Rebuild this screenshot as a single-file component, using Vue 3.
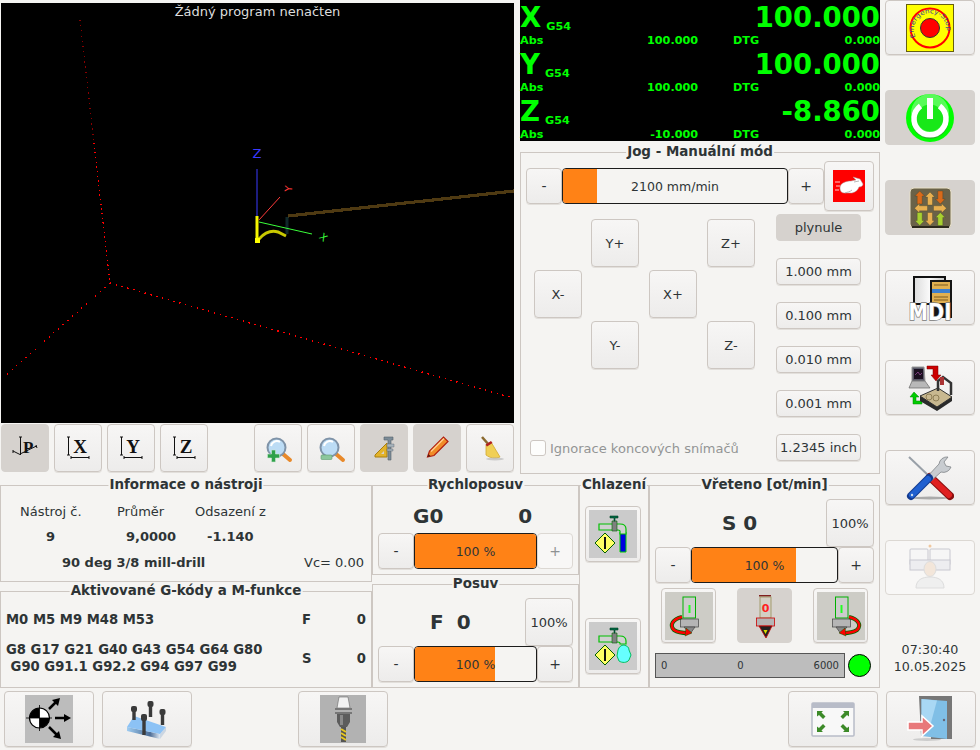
<template>
  <div class="app">
    <div class="main">
      <div class="work">
        <div class="upper">
          <!-- nahled drahy -->
          <div class="left-col">
            <div class="viewport">
              <div class="viewport-title">Žádný program nenačten</div>
              <svg class="scene" viewBox="1 3 513 420" width="513" height="420">
                <g shape-rendering="crispEdges">
                  <line x1="80" y1="20" x2="94" y2="143" stroke="#800" stroke-width="1.200" stroke-dasharray="1.200 4" />
                  <line x1="94" y1="143" x2="110" y2="283" stroke="#f00" stroke-width="1.200" stroke-dasharray="1.200 3.500" />
                  <line x1="110" y1="283" x2="3" y2="378" stroke="#f00" stroke-width="1.200" stroke-dasharray="1.200 5" />
                  <line x1="110" y1="283" x2="513" y2="398" stroke="#f00" stroke-width="1.400" stroke-dasharray="1.400 4.600" />
                  <line x1="288" y1="216" x2="514" y2="191" stroke="#4f3a12" stroke-width="3.200" />
                </g>
                <line x1="287" y1="217" x2="287" y2="234" stroke="#10282a" stroke-width="3" />
                <line x1="257" y1="169" x2="257" y2="218" stroke="#3a3aff" />
                <line x1="259" y1="220" x2="280" y2="197" stroke="#ff3a3a" />
                <line x1="259" y1="222" x2="312" y2="234" stroke="#3aff3a" />
                <path d="M259 239 Q268 229 278 232 L286 236" fill="none" stroke="#c8c800" stroke-width="3" />
                <line x1="257" y1="216" x2="257" y2="242" stroke="#f5f500" stroke-width="3" />
                <rect x="255" y="238" width="5" height="5" fill="#ff0" />
                <text x="257" y="158" class="axis" fill="#3a3aff" text-anchor="middle" font-size="13">Z</text>
                <text class="axis" fill="#3aff3a" text-anchor="middle" font-size="10" transform="translate(321 240) rotate(40)">X</text>
                <text class="axis" fill="#ff3a3a" text-anchor="middle" font-size="10" transform="translate(292 189) rotate(-85)">Y</text>
              </svg>
            </div>
            <div class="view-tools">
              <button class="btn tool checked">
                <svg viewBox="0 0 48 48" width="48" height="48">
                  <text x="22" y="29" class="serif-b" font-size="17">P</text>
                  <path d="M19.500 13V31M18 13h3M12 27l6 3M18 30.500l17.500-8.500M12 26v3M35 21l1 3" fill="none" stroke="#111" stroke-width="1" />
                </svg>
              </button>
              <button v-for="a in viewAxes" :key="a" class="btn tool">
                <svg viewBox="0 0 48 48" width="48" height="48">
                  <text x="26" y="29" text-anchor="middle" class="serif-b" font-size="19">{{ a }}</text>
                  <path d="M14.500 13V31M13 13h3M13 31h3M17 33.500H35M17 32v3M35 32v3" fill="none" stroke="#111" stroke-width="1" />
                </svg>
              </button>
              <div class="spacer"></div>
              <button class="btn tool">
                <svg viewBox="0 0 48 48" width="48" height="48">
                  <line x1="29" y1="30" x2="36" y2="36" stroke="#e8892a" stroke-width="4" stroke-linecap="round" />
                  <circle cx="22.500" cy="23.500" r="9" fill="#bcdcf5" stroke="#7f93a8" stroke-width="2" />
                  <path d="M17 22a6 6 0 0 1 9-4" fill="none" stroke="#fff" stroke-width="2" />
                  <path d="M17.500 26h4v4h4v4h-4v4h-4v-4h-4v-4h4z" fill="#2fa14a" stroke="#cfe8d4" stroke-width=".6" />
                </svg>
              </button>
              <button class="btn tool">
                <svg viewBox="0 0 48 48" width="48" height="48">
                  <line x1="29" y1="30" x2="36" y2="36" stroke="#e8892a" stroke-width="4" stroke-linecap="round" />
                  <circle cx="22.500" cy="23.500" r="9" fill="#bcdcf5" stroke="#7f93a8" stroke-width="2" />
                  <path d="M17 22a6 6 0 0 1 9-4" fill="none" stroke="#fff" stroke-width="2" />
                  <rect x="14" y="31" width="11" height="4.500" rx="1" fill="#8cc79c" stroke="#5f9d70" stroke-width=".6" />
                </svg>
              </button>
              <button class="btn tool checked">
                <svg viewBox="0 0 48 48" width="48" height="48">
                  <path d="M15 31 L27 19 V33 H15Z" fill="#e3b32a" stroke="#a87e10" stroke-width="1" />
                  <path d="M21 30l3-3v3z" fill="#d6d2ce" />
                  <path d="M24 13h9v3h-2v20h-3V16h-4z" fill="#7c8c98" stroke="#55626c" stroke-width=".6" />
                  <path d="M27 20h7v3h-7zM27 25h6v2h-6z" fill="#a8b4bc" stroke="#55626c" stroke-width=".4" />
                </svg>
              </button>
              <button class="btn tool checked">
                <svg viewBox="0 0 48 48" width="48" height="48">
                  <path d="M14.500 33l2-6 14-14 4.500 4.500-14 14z" fill="#f08c28" stroke="#b01e10" stroke-width="1.200" />
                  <path d="M18 27.500l13-13" stroke="#ffd08a" stroke-width="1.500" />
                  <path d="M14.500 33l1-3 2 2z" fill="#5a1a10" />
                </svg>
              </button>
              <button class="btn tool">
                <svg viewBox="0 0 48 48" width="48" height="48">
                  <line x1="16" y1="13" x2="23" y2="21" stroke="#8a6a30" stroke-width="2.500" />
                  <path d="M20 21l5-3 9 15c-5 2-10 1-14-2z" fill="#f0cf55" stroke="#d0a830" stroke-width=".8" />
                  <path d="M19.500 20.500l5.500-3.500 1.500 2-5.500 3.500z" fill="#b02020" />
                  <ellipse cx="29" cy="35" rx="9" ry="1.500" fill="#bbb" opacity=".7" />
                </svg>
              </button>
            </div>
          </div>

          <div class="right-col">
            <!-- DRO -->
            <div class="dro">
              <div v-for="row in dro" :key="row.axis" class="dro-row">
                <div class="dro-main">
                  <span class="dro-axis">{{ row.axis }}</span>
                  <span class="dro-g">G54</span>
                  <span class="dro-big">{{ row.value }}</span>
                </div>
                <div class="dro-sub">
                  <span class="dro-abs">Abs</span>
                  <span class="dro-absval">{{ row.abs }}</span>
                  <span class="dro-dtg">DTG</span>
                  <span class="dro-dtgval">0.000</span>
                </div>
              </div>
            </div>

            <!-- Jog -->
            <div class="group jog">
              <div class="group-title">Jog - Manuální mód</div>
              <div class="jog-top">
                <button class="btn sq-btn">-</button>
                <div class="bar jog-bar">
                  <div class="bar-fill" :style="{ width: '15%' }"></div>
                  <span class="bar-text">2100 mm/min</span>
                </div>
                <button class="btn sq-btn">+</button>
                <button class="btn rabbit-btn">
                  <svg viewBox="0 0 32 32" width="32" height="32">
                    <rect width="32" height="32" fill="#f00" />
                    <path d="M2 12h5M3 16h4M2 20h4" stroke="#fff" stroke-width=".8" />
                    <path d="M7 18c0-5 6-7 11-7 1 0 3-1 5-1l-3-3 7 2 3 5c0 2-2 3-4 3-1 3-3 5-7 6H11c-3 0-4-3-4-5z" fill="#fff" stroke="#a99" stroke-width=".5" />
                    <path d="M12 23c2-1 5-1 7-3M21 12l5-1" stroke="#999" stroke-width=".7" fill="none" />
                  </svg>
                </button>
              </div>
              <div class="jog-body">
                <div class="jog-left">
                  <div class="jog-pad">
                    <button class="btn pad-btn" style="grid-area: 1 / 2">Y+</button>
                    <button class="btn pad-btn" style="grid-area: 1 / 4">Z+</button>
                    <button class="btn pad-btn" style="grid-area: 2 / 1">X-</button>
                    <button class="btn pad-btn" style="grid-area: 2 / 3">X+</button>
                    <button class="btn pad-btn" style="grid-area: 3 / 2">Y-</button>
                    <button class="btn pad-btn" style="grid-area: 3 / 4">Z-</button>
                  </div>
                  <label class="check">
                    <span class="check-box"></span>
                    <span>Ignorace koncových snímačů</span>
                  </label>
                </div>
                <div class="incs">
                  <button v-for="(inc, i) in increments" :key="inc" class="btn inc-btn" :class="{ checked: i === 0 }">{{ inc }}</button>
                </div>
              </div>
            </div>
          </div>
        </div>

        <div class="lower">
          <div class="col-info">
            <div class="group info">
              <div class="group-title">Informace o nástroji</div>
              <div class="info-labels">
                <span>Nástroj č.</span>
                <span>Průměr</span>
                <span>Odsazení z</span>
              </div>
              <div class="info-values">
                <span>9</span>
                <span>9,0000</span>
                <span>-1.140</span>
              </div>
              <div class="info-name">
                <span class="tool-name">90 deg 3/8 mill-drill</span>
                <span>Vc= 0.00</span>
              </div>
            </div>
            <div class="group active">
              <div class="group-title">Aktivované G-kódy a M-funkce</div>
              <div class="code-row mcodes">
                <span class="codes">M0 M5 M9 M48 M53</span>
                <span class="code-key">F</span>
                <span class="code-val">0</span>
              </div>
              <div class="code-row gcodes">
                <span class="codes" v-text="gcodes"></span>
                <span class="code-key">S</span>
                <span class="code-val">0</span>
              </div>
            </div>
          </div>

          <div class="col-speed">
            <div class="group rapid">
              <div class="group-title">Rychloposuv</div>
              <div class="speed-top rapid-top">
                <span class="big g0">G0</span>
                <span class="big g0-val">0</span>
              </div>
              <div class="bar-row">
                <button class="btn sq-btn">-</button>
                <div class="bar">
                  <div class="bar-fill" :style="{ width: '100%' }"></div>
                  <span class="bar-text">100 %</span>
                </div>
                <button class="btn sq-btn disabled">+</button>
              </div>
            </div>
            <div class="group feed">
              <div class="group-title">Posuv</div>
              <div class="speed-top">
                <span class="big f-key">F</span>
                <span class="big f-val">0</span>
                <button class="btn pct-btn">100%</button>
              </div>
              <div class="bar-row">
                <button class="btn sq-btn">-</button>
                <div class="bar">
                  <div class="bar-fill" :style="{ width: '66.500%' }"></div>
                  <span class="bar-text">100 %</span>
                </div>
                <button class="btn sq-btn">+</button>
              </div>
            </div>
          </div>

          <div class="group cool">
            <div class="group-title">Chlazení</div>
            <button class="btn icon-btn">
              <svg viewBox="0 0 48 48" width="48" height="48">
                <rect width="48" height="48" fill="#cbcbcb" />
                <path d="M31 22h6v20h-6z" fill="#0000e0" stroke="#00d000" stroke-width="1" />
                <path d="M10 14h21c4 0 6 2 6 5v5h-6v-3c0-1-1-1-2-1H10z" fill="#d0d0d0" stroke="#00c000" stroke-width="1.200" />
                <path d="M23 11h5v10h-5z" fill="#808080" stroke="#006000" stroke-width=".6" />
                <path d="M21 6h8v2h-3v3h-1V8h-4z" fill="#064" stroke="#042" stroke-width=".6" />
                <path d="M16 23l10 10-10 10-10-10z" fill="#ffff66" stroke="#006000" stroke-width="1" />
                <rect x="15" y="27" width="2" height="12" fill="#111" />
              </svg>
            </button>
            <button class="btn icon-btn mist">
              <svg viewBox="0 0 48 48" width="48" height="48">
                <rect width="48" height="48" fill="#cbcbcb" />
                <path d="M10 14h21c4 0 6 2 6 5v3h-6v-1c0-1-1-1-2-1H10z" fill="#d0d0d0" stroke="#00c000" stroke-width="1.200" />
                <path d="M23 11h5v10h-5z" fill="#808080" stroke="#006000" stroke-width=".6" />
                <path d="M21 6h8v2h-3v3h-1V8h-4z" fill="#064" stroke="#042" stroke-width=".6" />
                <path d="M35 23c3 1 5 2 5 5l2 5-2 5c-2 3-7 3-10 1l-2-5 1-6c1-3 3-5 6-5z" fill="#66ffff" stroke="#00c060" stroke-width="1" />
                <path d="M16 23l10 10-10 10-10-10z" fill="#ffff66" stroke="#006000" stroke-width="1" />
                <rect x="15" y="27" width="2" height="12" fill="#111" />
              </svg>
            </button>
          </div>

          <div class="group spindle">
            <div class="group-title">Vřeteno [ot/min]</div>
            <div class="speed-top">
              <span class="big s-val">S 0</span>
              <button class="btn pct-btn">100%</button>
            </div>
            <div class="bar-row">
              <button class="btn sq-btn">-</button>
              <div class="bar">
                <div class="bar-fill" :style="{ width: '71.500%' }"></div>
                <span class="bar-text">100 %</span>
              </div>
              <button class="btn sq-btn">+</button>
            </div>
            <div class="spindle-btns">
              <button class="btn spin-btn">
                <svg viewBox="0 0 48 48" width="48" height="48">
                  <rect width="48" height="48" fill="#cdccc6" />
                  <rect x="18" y="5" width="12.500" height="21" fill="#ccc" stroke="#00b000" stroke-width="1" />
                  <rect x="23.500" y="13" width="2" height="8" fill="#2f2" />
                  <rect x="15.500" y="27" width="18" height="8" fill="#b5b5b5" stroke="#444" stroke-width=".7" />
                  <path d="M19 35h11l-5 7z" fill="#888" stroke="#444" stroke-width=".7" />
                  <path d="M17 25C8 27 4 33 9 38c3 2 8 3 14 3" fill="none" stroke="#060" stroke-width="4" />
                  <path d="M17 25C8 27 4 33 9 38c3 2 8 3 14 3" fill="none" stroke="#f00" stroke-width="2.500" />
                  <path d="M21 36l6 5-7 3z" fill="#f00" stroke="#060" stroke-width=".5" />
                </svg>
              </button>
              <button class="btn spin-btn checked">
                <svg viewBox="0 0 48 48" width="48" height="48">
                  <rect x="18" y="3" width="12" height="1.500" fill="#802020" />
                  <rect x="19" y="5" width="11" height="21" fill="#d3cfc4" stroke="#999058" stroke-width=".8" />
                  <text x="24.500" y="20" text-anchor="middle" fill="#f22" class="spin-zero">0</text>
                  <rect x="15.500" y="26" width="18" height="8" fill="#b5b5b5" stroke="#c00" stroke-width=".8" />
                  <path d="M18 34h13l-6 12z" fill="#222" stroke="#c00" stroke-width=".8" />
                  <path d="M22.500 38h4l-2 4z" fill="#dd0" />
                </svg>
              </button>
              <button class="btn spin-btn">
                <svg viewBox="0 0 48 48" width="48" height="48">
                  <rect width="48" height="48" fill="#cdccc6" />
                  <g transform="matrix(-1 0 0 1 49 0)">
                    <rect x="18" y="5" width="12.500" height="21" fill="#ccc" stroke="#00b000" stroke-width="1" />
                    <rect x="23.500" y="13" width="2" height="8" fill="#2f2" />
                    <rect x="15.500" y="27" width="18" height="8" fill="#b5b5b5" stroke="#444" stroke-width=".7" />
                    <path d="M19 35h11l-5 7z" fill="#888" stroke="#444" stroke-width=".7" />
                    <path d="M17 25C8 27 4 33 9 38c3 2 8 3 14 3" fill="none" stroke="#060" stroke-width="4" />
                    <path d="M17 25C8 27 4 33 9 38c3 2 8 3 14 3" fill="none" stroke="#f00" stroke-width="2.500" />
                    <path d="M21 36l6 5-7 3z" fill="#f00" stroke="#060" stroke-width=".5" />
                  </g>
                </svg>
              </button>
            </div>
            <div class="rpm-row">
              <div class="rpm-bar">
                <span>0</span>
                <span>0</span>
                <span>6000</span>
              </div>
              <div class="led"></div>
            </div>
          </div>
        </div>
      </div>

      <!-- prave tlacitka -->
      <div class="side">
        <button class="btn side-btn">
          <svg viewBox="0 0 48 48" width="48" height="48">
            <rect x=".5" y=".5" width="47" height="47" fill="#ff0" stroke="#665f10" />
            <circle cx="24" cy="24" r="19.500" fill="none" stroke="#f00" stroke-width="2" />
            <path id="estop-arc" d="M9.500 33A16.500 16.500 0 1 1 40.500 29" fill="none" />
            <text class="estop" fill="#3a3f90"><textPath href="#estop-arc" textLength="60" lengthAdjust="spacingAndGlyphs">Emergency-Stop</textPath></text>
            <circle cx="24" cy="24" r="9.500" fill="#f00" stroke="#333" stroke-width="1" />
          </svg>
        </button>
        <button class="btn side-btn checked">
          <svg viewBox="0 0 48 48" width="48" height="48">
            <circle cx="24" cy="24" r="24" fill="#0f0" />
            <circle cx="24" cy="19" r="19" fill="#7dfa7d" opacity=".7" />
            <path d="M14.500 12A16 16 0 1 0 33.500 12" fill="none" stroke="#555" stroke-width="5" opacity=".5" transform="translate(0 1.500)" />
            <circle cx="24" cy="24" r="13.500" fill="#18e818" />
            <path d="M14.500 12A16 16 0 1 0 33.500 12" fill="none" stroke="#fff" stroke-width="5.500" />
            <rect x="21" y="4" width="6" height="21" fill="#fff" />
          </svg>
        </button>
        <button class="btn side-btn checked">
          <svg viewBox="0 0 48 48" width="48" height="48">
            <rect x="4" y="4" width="41" height="40" rx="4" fill="#6a6248" stroke="#e8e0c8" stroke-width="1" />
            <rect x="6" y="42" width="37" height="2" fill="#2d2a1e" />
            <g v-for="a in jogArrows" :key="a.x + '-' + a.y" :transform="`translate(${a.x} ${a.y}) rotate(${a.r})`">
              <path d="M0 -6.500L4.800 -1.500H2.500V6.500H-2.500V-1.500H-4.800Z" :fill="a.c" stroke="#3b3622" stroke-width=".3" />
            </g>
          </svg>
        </button>
        <button class="btn side-btn">
          <svg class="mdi-icon" viewBox="0 0 48 48" width="48" height="48">
            <defs>
              <linearGradient id="mdi-win" x1="0" y1="0" x2="1" y2="0">
                <stop offset="0" stop-color="#dcdcdc" />
                <stop offset=".5" stop-color="#fafafa" />
                <stop offset="1" stop-color="#c8c8c8" />
              </linearGradient>
            </defs>
            <rect x="8" y="3" width="31" height="27" fill="url(#mdi-win)" stroke="#111" stroke-width="2" />
            <rect x="24" y="6" width="22" height="38" fill="#151515" />
            <rect x="26" y="8" width="18" height="7" fill="#e0b050" />
            <rect x="26" y="15" width="18" height="4" fill="#3a7fd0" />
            <rect x="26" y="19" width="18" height="10" fill="#e0b050" />
            <path d="M28 11h14M28 23h14M28 26h14" stroke="#7a5a20" />
            <g transform="translate(0 45.500) scale(1 1.150)">
              <text x="24" y="0" text-anchor="middle" class="mdi" fill="#fff" stroke="#777" stroke-width="1.200" paint-order="stroke">MDI</text>
            </g>
          </svg>
        </button>
        <button class="btn side-btn">
          <svg viewBox="0 0 48 48" width="48" height="48">
            <path d="M6 3h12l1 14H6z" fill="#5a5a68" stroke="#999" />
            <rect x="8" y="5" width="9" height="10" fill="#1a1020" />
            <path d="M9 11l3-3 2 3 2-2" stroke="#a050a0" fill="none" stroke-width=".7" />
            <path d="M6 17h13l5 7H3z" fill="#b8b8b8" stroke="#666" stroke-width=".7" />
            <path d="M21 2h11v9h3l-5 6-5-6h2V5h-6z" fill="#c00" stroke="#700" stroke-width=".5" />
            <path d="M8 28l5 5h-3v4h6v3H7v-7H4z" fill="#0c0" stroke="#080" stroke-width=".5" />
            <path d="M14 32L32 24L46 33L31 43Z" fill="#c8b890" stroke="#333" stroke-width="1" />
            <path d="M31 43v4l15-10v-4zM14 32v5l17 10v-4z" fill="#2a2a2a" />
            <path d="M32 27v-10l5-4 8 6v12" fill="none" stroke="#333" stroke-width="2.500" />
            <rect x="34" y="13" width="4" height="8" fill="#a33" />
            <circle cx="23" cy="33" r="3" fill="none" stroke="#807048" stroke-width=".8" />
            <circle cx="30" cy="34" r="3" fill="none" stroke="#807048" stroke-width=".8" />
          </svg>
        </button>
        <button class="btn side-btn">
          <svg viewBox="0 0 48 48" width="48" height="48">
            <ellipse cx="24" cy="44" rx="18" ry="1.500" fill="#aaa" />
            <line x1="3" y1="3" x2="24" y2="23" stroke="#99a0a8" stroke-width="2" />
            <path d="M24 23L44 42" stroke="#8a1010" stroke-width="8" stroke-linecap="round" />
            <path d="M25 24L43 41" stroke="#e02020" stroke-width="6" stroke-linecap="round" />
            <path d="M33 10a8 8 0 0 1 9-7l-4 5 2 4 5 1a8 8 0 0 1-10 5L24 28l-4-4z" fill="#c8ccd0" stroke="#808488" stroke-width=".8" />
            <path d="M23 24L5 42" stroke="#123a90" stroke-width="8" stroke-linecap="round" />
            <path d="M22 25L6 41" stroke="#2060d0" stroke-width="6" stroke-linecap="round" />
            <circle cx="6" cy="41" r="1.200" fill="#cde" />
          </svg>
        </button>
        <button class="btn side-btn disabled">
          <svg viewBox="0 0 48 48" width="48" height="48">
            <rect x="4" y="5" width="18" height="16" rx="1" fill="#f6f6f6" stroke="#c8c8d0" stroke-width="1" />
            <rect x="24" y="5" width="20" height="16" rx="1" fill="#f6f6f6" stroke="#c8c8d0" stroke-width="1" />
            <rect x="4" y="16" width="40" height="10" fill="#ededf0" stroke="#c8c8d0" />
            <circle cx="24" cy="2" r="1.500" fill="#f0c8a0" />
            <path d="M10 44c0-8 6-11 14-11s14 3 14 11z" fill="#efefef" stroke="#ddd" />
            <ellipse cx="24" cy="25" rx="6" ry="7.500" fill="#f3e6da" stroke="#ddd" />
          </svg>
        </button>
        <div class="clock">
          <div>07:30:40</div>
          <div>10.05.2025</div>
        </div>
      </div>
    </div>

    <!-- spodni lista -->
    <div class="bottom">
      <button class="btn bottom-btn">
        <svg viewBox="0 0 48 48" width="48" height="48">
          <rect width="48" height="48" fill="#bcbcbc" />
          <circle cx="14.500" cy="23" r="10" fill="#fff" />
          <path d="M14.500 23V13A10 10 0 0 0 4.500 23ZM14.500 23V33A10 10 0 0 0 24.500 23Z" fill="#000" />
          <circle cx="14.500" cy="23" r="10" fill="none" stroke="#000" stroke-width="1.200" />
          <path d="M14.500 10V36M1 23H27" stroke="#000" stroke-width=".8" />
          <path d="M24 14L32 6" stroke="#000" stroke-width="2.500" />
          <path d="M35 3l-2 8-6-6z" fill="#000" />
          <path d="M30 23H40" stroke="#000" stroke-width="2.500" />
          <path d="M46 23l-7 4v-8z" fill="#000" />
          <path d="M24 32L32 40" stroke="#000" stroke-width="2.500" />
          <path d="M36 44l-8-2 6-6z" fill="#000" />
        </svg>
      </button>
      <button class="btn bottom-btn">
        <svg viewBox="0 0 48 48" width="48" height="48">
          <defs>
            <linearGradient id="block-side" x1="0" y1="0" x2="1" y2="0">
              <stop offset="0" stop-color="#9fcdf2" />
              <stop offset=".7" stop-color="#4d6d96" />
              <stop offset="1" stop-color="#dfe8f2" />
            </linearGradient>
          </defs>
          <path d="M4 32L37 39V44L4 36Z" fill="url(#block-side)" />
          <path d="M37 39L43 32V36L37 44Z" fill="#cbd6e2" />
          <path d="M4 32L11 21L43 32L37 39Z" fill="#8cc2f5" />
          <g fill="#3a3a3a">
            <rect x="8" y="11" width="6" height="6" rx="2" /><rect x="9.300" y="16" width="3.400" height="9" />
            <rect x="24.500" y="6" width="6" height="6" rx="2" /><rect x="25.800" y="11" width="3.400" height="11" />
            <rect x="36.500" y="14" width="6" height="6" rx="2" /><rect x="37.800" y="19" width="3.400" height="11" />
            <rect x="18" y="19" width="6" height="7" rx="2" /><rect x="19.300" y="25" width="3.400" height="15" />
          </g>
        </svg>
      </button>
      <div class="spacer-a"></div>
      <button class="btn bottom-btn">
        <svg viewBox="0 0 46 48" width="46" height="48">
          <rect width="46" height="48" fill="#b2b2b2" />
          <path d="M19 2h9l2 11H17z" fill="#f2f2f2" stroke="#666" stroke-width=".6" />
          <rect x="15" y="13" width="17" height="2" fill="#777" />
          <rect x="15" y="17" width="17" height="2" fill="#777" />
          <path d="M17 19h13v8l-3 5h-7l-3-5z" fill="#5c5c5c" />
          <rect x="20" y="20" width="3" height="10" fill="#8a8a8a" />
          <rect x="21" y="32" width="5" height="15" fill="#555" />
          <path d="M21 34l5 3M21 38l5 3M21 42l5 3" stroke="#e8c820" stroke-width="2" />
        </svg>
      </button>
      <div class="spacer"></div>
      <button class="btn bottom-btn">
        <svg viewBox="0 0 48 48" width="48" height="48">
          <rect x="3" y="8" width="42" height="33" rx="1" fill="#f8f8f8" stroke="#b8bcc8" stroke-width="1.500" />
          <rect x="3" y="8" width="42" height="5" fill="#b8bcc8" />
          <g fill="#3c8a28">
            <path d="M8 16h6l-1.500 1.500 4 4-2.500 2.500-4-4L8 21.500z" />
            <path d="M40 16h-6l1.500 1.500-4 4 2.500 2.500 4-4L40 21.500z" />
            <path d="M8 37h6l-1.500-1.500 4-4-2.500-2.500-4 4L8 31.500z" />
            <path d="M40 37h-6l1.500-1.500-4-4 2.500-2.500 4 4L40 31.500z" />
          </g>
        </svg>
      </button>
      <button class="btn bottom-btn">
        <svg viewBox="0 0 48 48" width="48" height="48">
          <ellipse cx="20" cy="44.500" rx="14" ry="1.500" fill="#ccc" />
          <path d="M12 1H45V44H24V41H14z" fill="#777" />
          <path d="M14.500 4L40 6V44L14.500 41z" fill="#80bfe6" />
          <path d="M14.500 4L30 5.500 22 35H14.500z" fill="#a9d8f4" />
          <circle cx="37" cy="25" r="1.200" fill="#667" />
          <path d="M1 27H15V21L26 31 15 41V35H1z" fill="#e8787a" stroke="#fff" stroke-width="1.500" />
        </svg>
      </button>
    </div>
  </div>
</template>

<script setup>
const viewAxes = ['X', 'Y', 'Z']

const dro = [
  { axis: 'X', value: '100.000', abs: '100.000' },
  { axis: 'Y', value: '100.000', abs: '100.000' },
  { axis: 'Z', value: '-8.860', abs: '-10.000' }
]

const increments = ['plynule', '1.000 mm', '0.100 mm', '0.010 mm', '0.001 mm', '1.2345 inch']

const gcodes = 'G8 G17 G21 G40 G43 G54 G64 G80\n G90 G91.1 G92.2 G94 G97 G99'

// sipky na ikone rucniho posuvu
const jogArrows = [
  { x: 13.7, y: 13.5, r: 0, c: '#d96a1a' },
  { x: 24, y: 14.5, r: 0, c: '#e8b050' },
  { x: 34.3, y: 13.5, r: 180, c: '#d96a1a' },
  { x: 15, y: 24.3, r: 270, c: '#e8b050' },
  { x: 34, y: 24.3, r: 90, c: '#e8b050' },
  { x: 13.7, y: 35, r: 180, c: '#a8d030' },
  { x: 24, y: 35, r: 180, c: '#e8b050' },
  { x: 34.3, y: 35, r: 0, c: '#a8d030' }
]
</script>

<style>
html, body {
  margin: 0;
  background: #f5f4f2;
}
</style>

<style scoped>
.app {
  width: 980px;
  height: 750px;
  display: flex;
  flex-direction: column;
  overflow: hidden;
  background: #f5f4f2;
  color: #2e3436;
  font-family: "DejaVu Sans", sans-serif;
  font-size: 13px;
}

.main {
  display: flex;
  height: 688px;
}

.work {
  width: 880px;
}

.upper {
  display: flex;
  height: 474px;
}

.left-col {
  width: 515px;
  padding: 3px 1px 0 1px;
  box-sizing: border-box;
}

.viewport {
  position: relative;
  width: 513px;
  height: 420px;
  background: #000;
}

.viewport-title {
  position: absolute;
  top: 0;
  left: 0;
  right: 0;
  text-align: center;
  color: #ddd;
  font-size: 13px;
  line-height: 17px;
}

.scene {
  display: block;
}

.axis {
  font-family: "DejaVu Sans", sans-serif;
  font-weight: 400;
}

.view-tools {
  display: flex;
  gap: 5px;
  margin-top: 1px;
}

.spacer {
  flex: 1;
}

.spacer-a {
  width: 90px;
}

/* tlacitka */
.btn {
  box-sizing: border-box;
  display: flex;
  align-items: center;
  justify-content: center;
  padding: 0;
  font-family: inherit;
  font-size: 13px;
  color: #2e3436;
  border: 1px solid #cdc7c2;
  border-radius: 4px;
  background: linear-gradient(#f7f6f5, #edeceb);
  box-shadow: 0 1px 0 #e2dfdb;
}

.btn.checked {
  background: #d6d2ce;
  border-color: #d6d2ce;
  box-shadow: none;
}

.btn.disabled {
  background: #f8f7f6;
  border-color: #dcd8d3;
  box-shadow: none;
  color: #8f9293;
}

.btn svg {
  display: block;
  flex: none;
}

.btn .mdi-icon {
  overflow: visible;
}

.tool {
  width: 48px;
  height: 48px;
}

.sq-btn {
  width: 36px;
  height: 36px;
  flex: none;
  font-size: 14px;
}

.rabbit-btn {
  width: 50px;
  height: 50px;
  flex: none;
}

.pad-btn {
  width: 48px;
  height: 48px;
}

.inc-btn {
  width: 85px;
  height: 27px;
}

.pct-btn {
  width: 48px;
  height: 48px;
  margin-left: auto;
  flex: none;
}

.icon-btn {
  width: 56px;
  height: 56px;
}

.spin-btn {
  width: 55px;
  height: 55px;
}

.side-btn {
  width: 90px;
  height: 55px;
}

.bottom-btn {
  width: 90px;
  height: 56px;
}

/* DRO */
.right-col {
  width: 360px;
  margin-left: 5px;
}

.dro {
  height: 141px;
  background: #000;
  color: #00ff00;
  font-weight: 700;
  font-size: 11.200px;
}

.dro-row {
  height: 47px;
}

.dro-main {
  display: flex;
  align-items: baseline;
  height: 33px;
  padding-top: 2px;
  box-sizing: border-box;
}

.dro-axis,
.dro-big {
  font-size: 27.500px;
  line-height: 31px;
}

.dro-g {
  align-self: flex-end;
  line-height: 14px;
  margin: 0 0 -1px 5px;
}

.dro-big {
  margin-left: auto;
}

.dro-sub {
  display: flex;
  padding-top: 1px;
  line-height: 13px;
}

.dro-abs {
  width: 125px;
}

.dro-absval {
  width: 53px;
  text-align: right;
}

.dro-dtg {
  margin-left: 35px;
}

.dro-dtgval {
  margin-left: auto;
}

/* skupiny */
.group {
  position: relative;
  box-sizing: border-box;
  border: 1px solid #cdc7c2;
}

.group-title {
  position: absolute;
  top: -10px;
  left: 50%;
  transform: translateX(-50%);
  padding: 0 1px;
  background: #f5f4f2;
  font-weight: 700;
  font-size: 13.450px;
  line-height: 18px;
  white-space: nowrap;
}

.jog {
  margin-top: 11px;
  height: 322px;
  padding: 8px 5px 0;
}

.jog-top {
  display: flex;
  align-items: center;
  height: 50px;
}

.bar {
  position: relative;
  flex: 1;
  height: 36px;
  box-sizing: border-box;
  border: 1px solid #1c1c1c;
  border-radius: 4px;
  display: flex;
  align-items: center;
  justify-content: center;
  overflow: hidden;
  background: #f5f4f2;
  font-size: 12.500px;
}

.bar-fill {
  position: absolute;
  top: 0;
  bottom: 0;
  left: 0;
  background: #ff8216;
}

.bar-text {
  position: relative;
}

.jog-body {
  display: flex;
}

.jog-left {
  width: 250px;
}

.jog-pad {
  display: grid;
  grid-template-columns: 57px 58px 58px 48px;
  grid-template-rows: 51px 51px 48px;
  margin: 8px 0 0 8px;
}

.check {
  display: flex;
  align-items: center;
  gap: 4px;
  margin: 71px 0 0 4px;
  color: #939595;
}

.check-box {
  width: 16px;
  height: 16px;
  box-sizing: border-box;
  border: 1px solid #cdc7c2;
  border-radius: 3px;
  background: #fdfdfc;
}

.incs {
  display: flex;
  flex-direction: column;
  gap: 17px;
  margin-top: 3px;
}

/* spodni cast */
.lower {
  display: flex;
  margin-top: 11px;
  height: 203px;
}

.col-info {
  width: 372px;
}

.info {
  height: 97px;
}

.info-labels,
.info-values {
  display: grid;
}

.info-labels {
  grid-template-columns: 97px 78px auto;
  padding: 18px 0 0 19px;
}

.info-values {
  grid-template-columns: 80px 81px auto;
  padding: 10px 0 0 45px;
  font-weight: 700;
}

.info-name {
  display: flex;
  justify-content: space-between;
  padding: 11px 7px 0 61px;
}

.tool-name {
  font-weight: 700;
}

.active {
  height: 97px;
  margin-top: 9px;
}

.code-row {
  display: flex;
  align-items: center;
  padding: 0 5px;
  font-weight: 700;
  font-size: 13.200px;
}

.mcodes {
  height: 17px;
  margin-top: 19px;
}

.gcodes {
  height: 34px;
  margin-top: 13px;
}

.codes {
  width: 296px;
  flex: none;
  line-height: 17px;
  white-space: pre;
}

.code-key {
  width: 20px;
}

.code-val {
  margin-left: auto;
}

.col-speed {
  width: 207px;
}

.rapid {
  height: 90px;
}

.feed {
  height: 104px;
  margin-top: 9px;
}

.speed-top {
  display: flex;
  align-items: center;
  height: 61px;
  padding: 13px 5px 0;
  box-sizing: border-box;
}

.rapid-top {
  height: 47px;
}

.big {
  font-size: 20px;
  font-weight: 700;
}

.g0 {
  margin-left: 35px;
}

.g0-val {
  margin-left: 75px;
}

.f-key {
  margin-left: 52px;
}

.f-val {
  margin-left: 13px;
}

.s-val {
  margin-left: 67px;
}

.bar-row {
  display: flex;
  padding: 0 5px;
}

.cool {
  width: 70px;
  height: 203px;
  padding: 20px 5px 0;
}

.mist {
  margin-top: 56px;
}

.spindle {
  width: 231px;
  height: 203px;
}

.spindle-btns {
  display: flex;
  justify-content: space-between;
  margin: 5px 11px 0 11px;
}

.rpm-row {
  display: flex;
  align-items: center;
  margin: 10px 0 0 5px;
}

.rpm-bar {
  width: 190px;
  height: 25px;
  box-sizing: border-box;
  display: flex;
  align-items: center;
  justify-content: space-between;
  padding: 0 5px;
  border: 1px solid #555;
  background: #bdbdbd;
  font-size: 10px;
}

.led {
  width: 23px;
  height: 23px;
  margin-left: 3px;
  box-sizing: border-box;
  border: 1.500px solid #000;
  border-radius: 50%;
  background: #00ff00;
}

/* bocni sloupec */
.side {
  width: 100px;
  padding-left: 5px;
  box-sizing: border-box;
  display: flex;
  flex-direction: column;
  gap: 35px;
}

.clock {
  width: 90px;
  margin-top: 11px;
  text-align: center;
  font-size: 12.670px;
  line-height: 17px;
}

.bottom {
  display: flex;
  gap: 8px;
  padding: 3px 4px 0;
}

/* text v ikonach */
.serif-b {
  font-family: "Liberation Serif", serif;
  font-weight: 700;
  fill: #111;
}

.estop {
  font-family: "DejaVu Sans", sans-serif;
  font-size: 6.500px;
  font-weight: 400;
}

.mdi {
  font-family: "DejaVu Sans", sans-serif;
  font-size: 19.500px;
  font-weight: 700;
}

.spin-zero {
  font-family: "DejaVu Sans", sans-serif;
  font-size: 11px;
  font-weight: 700;
}
</style>
